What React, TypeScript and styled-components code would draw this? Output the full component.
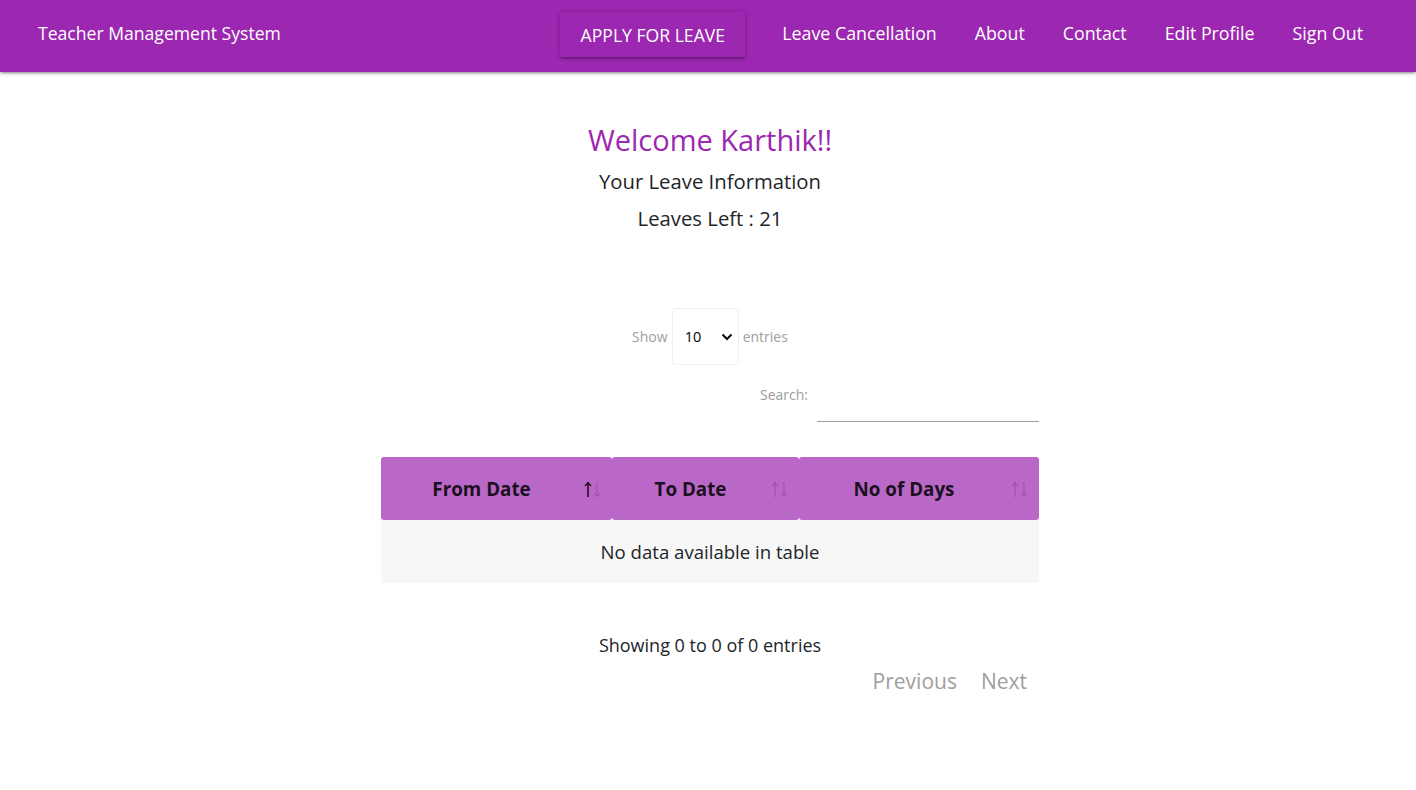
import React from "react";
import styled, { createGlobalStyle } from "styled-components";

const GlobalStyle = createGlobalStyle`
  html, body {
    margin: 0;
    padding: 0;
    background: #ffffff;
    font-family: "Open Sans", "Noto Sans", Arial, sans-serif;
    color: #212529;
  }
  * { box-sizing: border-box; }
`;

const NavBar = styled.nav`
  height: 72px;
  background: #9c27b0;
  box-shadow: 0 2px 2px 0 rgba(0,0,0,0.14), 0 3px 1px -2px rgba(0,0,0,0.12), 0 1px 5px 0 rgba(0,0,0,0.2);
  display: flex;
  align-items: center;
  padding: 0 34px 0 38px;
  color: #ffffff;
`;

const Brand = styled.a`
  font-size: 17.6px;
  color: #ffffff;
  text-decoration: none;
  flex: 1;
  margin-top: -7px;
`;

const NavList = styled.ul`
  list-style: none;
  display: flex;
  align-items: center;
  margin: 0;
  padding: 0;
  height: 72px;
`;

const NavItem = styled.li`
  display: flex;
  align-items: center;
  height: 100%;
`;

const NavLink = styled.a`
  font-size: 17.8px;
  color: #ffffff;
  text-decoration: none;
  padding: 0 19px;
  margin-top: -7px;
`;

const ApplyButton = styled.a`
  display: inline-flex;
  align-items: center;
  justify-content: center;
  width: 185px;
  height: 45px;
  margin-top: -3px;
  margin-right: 18px;
  background: #9c27b0;
  border-radius: 2px;
  color: #ffffff;
  text-transform: uppercase;
  font-size: 17.6px;
  text-decoration: none;
  padding-top: 1px;
  box-shadow: 0 2px 2px 0 rgba(0,0,0,0.14), 0 3px 1px -2px rgba(0,0,0,0.12), 0 1px 5px 0 rgba(0,0,0,0.2);
`;

const Main = styled.main`
  display: flex;
  flex-direction: column;
  align-items: center;
  padding-left: 4px;
`;

const Welcome = styled.h2`
  margin: 48px 0 0;
  font-size: 29px;
  font-weight: 400;
  line-height: 40px;
  color: #9c27b0;
`;

const InfoLine = styled.p<{ $gap: number }>`
  margin: ${(p) => p.$gap}px 0 0;
  font-size: 20.3px;
  line-height: 30px;
  color: #212529;
`;

const LengthRow = styled.div`
  margin-top: 75px;
  display: flex;
  align-items: center;
  gap: 4px;
  font-size: 14px;
  color: #9e9e9e;
`;

const SelectWrap = styled.div`
  position: relative;
  width: 67px;
  height: 57px;
`;

const Select = styled.select`
  appearance: none;
  -webkit-appearance: none;
  width: 100%;
  height: 100%;
  border: 1px solid #efefef;
  border-radius: 3px;
  background: #ffffff;
  padding: 0 0 0 12px;
  font-family: "Open Sans", Arial, sans-serif;
  font-size: 14.5px;
  color: #000000;
  outline: none;
`;

const Chevron = styled.svg`
  position: absolute;
  right: 6px;
  top: 25px;
  pointer-events: none;
`;

const TableArea = styled.section`
  width: 658px;
  display: flex;
  flex-direction: column;
`;

const SearchRow = styled.div`
  margin-top: 11px;
  display: flex;
  justify-content: flex-end;
  align-items: flex-start;
  gap: 9px;
`;

const SearchLabel = styled.label`
  font-size: 14px;
  color: #9e9e9e;
  line-height: 18px;
  padding-top: 10px;
`;

const SearchInput = styled.input`
  width: 222px;
  height: 46px;
  border: none;
  border-bottom: 1px solid #9e9e9e;
  outline: none;
  background: transparent;
  font-size: 16px;
`;

const Table = styled.table`
  margin-top: 35px;
  width: 100%;
  border-collapse: separate;
  border-spacing: 0;
  table-layout: fixed;
`;

const HeadCell = styled.th`
  position: relative;
  height: 63px;
  background: #ba68c8;
  border-radius: 3px;
  padding: 0 40px 0 10px;
  font-size: 18.8px;
  font-weight: 700;
  color: #1b1020;
  text-align: center;
`;

const SortIcons = styled.span`
  position: absolute;
  right: 11px;
  top: 24px;
  display: flex;
  gap: 1px;
`;

const ArrowSvg = styled.svg<{ $active?: boolean }>`
  display: block;
  color: ${(p) => (p.$active ? "#2a0f1c" : "rgba(60,0,70,0.16)")};
`;

const EmptyCell = styled.td`
  height: 63px;
  background: #f7f7f7;
  text-align: center;
  font-size: 18.6px;
  color: #212529;
`;

const Info = styled.div`
  margin-top: 50px;
  text-align: center;
  font-size: 18px;
  line-height: 24px;
  color: #212529;
`;

const Pagination = styled.div`
  margin-top: 12px;
  display: flex;
  justify-content: flex-end;
`;

const PageButton = styled.a`
  font-size: 21px;
  line-height: 24px;
  color: #9e9e9e;
  padding: 0 12px;
  cursor: default;
`;

function UpArrow({ active }: { active?: boolean }) {
  return (
    <ArrowSvg $active={active} width="8" height="17" viewBox="0 0 8 17">
      <path d="M4 2 V16" stroke="currentColor" strokeWidth="1.6" fill="none" />
      <path d="M1 5 L4 1.5 L7 5" stroke="currentColor" strokeWidth="1.3" fill="none" />
    </ArrowSvg>
  );
}

function DownArrow({ active }: { active?: boolean }) {
  return (
    <ArrowSvg $active={active} width="8" height="17" viewBox="0 0 8 17">
      <path d="M4 1 V15" stroke="currentColor" strokeWidth="1.6" fill="none" />
      <path d="M1 12 L4 15.5 L7 12" stroke="currentColor" strokeWidth="1.3" fill="none" />
    </ArrowSvg>
  );
}

const columns = [
  { label: "From Date", width: 231, active: true },
  { label: "To Date", width: 187, active: false },
  { label: "No of Days", width: 240, active: false },
];

export default function App() {
  return (
    <>
      <GlobalStyle />
      <NavBar>
        <Brand href="#">Teacher Management System</Brand>
        <NavList>
          <NavItem>
            <ApplyButton href="#">Apply for leave</ApplyButton>
          </NavItem>
          <NavItem><NavLink href="#">Leave Cancellation</NavLink></NavItem>
          <NavItem><NavLink href="#">About</NavLink></NavItem>
          <NavItem><NavLink href="#">Contact</NavLink></NavItem>
          <NavItem><NavLink href="#">Edit Profile</NavLink></NavItem>
          <NavItem><NavLink href="#">Sign Out</NavLink></NavItem>
        </NavList>
      </NavBar>
      <Main>
        <Welcome>Welcome Karthik!!</Welcome>
        <InfoLine $gap={6}>Your Leave Information</InfoLine>
        <InfoLine $gap={7}>Leaves Left : 21</InfoLine>

        <LengthRow>
          <span>Show</span>
          <SelectWrap>
            <Select defaultValue="10">
              <option value="10">10</option>
              <option value="25">25</option>
              <option value="50">50</option>
              <option value="100">100</option>
            </Select>
            <Chevron width="12" height="8" viewBox="0 0 12 8">
              <path d="M1.5 1.5 L6 6 L10.5 1.5" fill="none" stroke="#000" strokeWidth="2" />
            </Chevron>
          </SelectWrap>
          <span>entries</span>
        </LengthRow>

        <TableArea>
          <SearchRow>
            <SearchLabel>Search:</SearchLabel>
            <SearchInput type="search" />
          </SearchRow>

          <Table>
            <colgroup>
              {columns.map((c) => (
                <col key={c.label} style={{ width: c.width }} />
              ))}
            </colgroup>
            <thead>
              <tr>
                {columns.map((c) => (
                  <HeadCell key={c.label}>
                    {c.label}
                    <SortIcons>
                      <UpArrow active={c.active} />
                      <DownArrow />
                    </SortIcons>
                  </HeadCell>
                ))}
              </tr>
            </thead>
            <tbody>
              <tr>
                <EmptyCell colSpan={3}>No data available in table</EmptyCell>
              </tr>
            </tbody>
          </Table>

          <Info>Showing 0 to 0 of 0 entries</Info>
          <Pagination>
            <PageButton>Previous</PageButton>
            <PageButton>Next</PageButton>
          </Pagination>
        </TableArea>
      </Main>
    </>
  );
}
